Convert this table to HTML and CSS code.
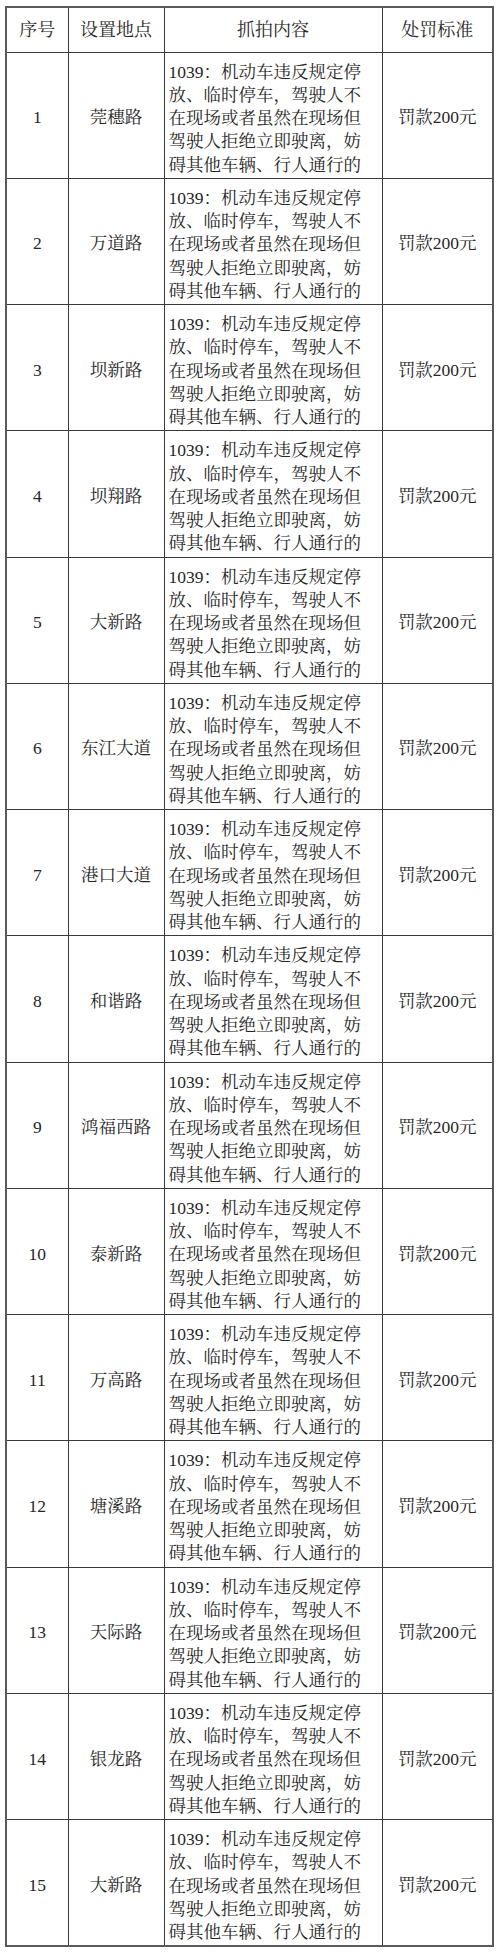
FILE: index.html
```html
<!DOCTYPE html>
<html lang="zh-CN">
<head>
<meta charset="utf-8">
<title>抓拍点位</title>
<link rel="stylesheet" href="styles.css">
</head>
<body>
<table class="grid">
  <colgroup>
    <col class="c-no"><col class="c-loc"><col class="c-desc"><col class="c-fine">
  </colgroup>
  <thead>
    <tr class="head"><th>序号</th><th>设置地点</th><th>抓拍内容</th><th>处罚标准</th></tr>
  </thead>
  <tbody>
    <tr><td class="no">1</td><td class="loc">莞穗路</td><td class="desc"><span class="ln">1039：机动车违反规定停</span><span class="ln">放、临时停车，驾驶人不</span><span class="ln">在现场或者虽然在现场但</span><span class="ln">驾驶人拒绝立即驶离，妨</span><span class="ln">碍其他车辆、行人通行的</span></td><td class="fine">罚款200元</td></tr>
    <tr><td class="no">2</td><td class="loc">万道路</td><td class="desc"><span class="ln">1039：机动车违反规定停</span><span class="ln">放、临时停车，驾驶人不</span><span class="ln">在现场或者虽然在现场但</span><span class="ln">驾驶人拒绝立即驶离，妨</span><span class="ln">碍其他车辆、行人通行的</span></td><td class="fine">罚款200元</td></tr>
    <tr><td class="no">3</td><td class="loc">坝新路</td><td class="desc"><span class="ln">1039：机动车违反规定停</span><span class="ln">放、临时停车，驾驶人不</span><span class="ln">在现场或者虽然在现场但</span><span class="ln">驾驶人拒绝立即驶离，妨</span><span class="ln">碍其他车辆、行人通行的</span></td><td class="fine">罚款200元</td></tr>
    <tr><td class="no">4</td><td class="loc">坝翔路</td><td class="desc"><span class="ln">1039：机动车违反规定停</span><span class="ln">放、临时停车，驾驶人不</span><span class="ln">在现场或者虽然在现场但</span><span class="ln">驾驶人拒绝立即驶离，妨</span><span class="ln">碍其他车辆、行人通行的</span></td><td class="fine">罚款200元</td></tr>
    <tr><td class="no">5</td><td class="loc">大新路</td><td class="desc"><span class="ln">1039：机动车违反规定停</span><span class="ln">放、临时停车，驾驶人不</span><span class="ln">在现场或者虽然在现场但</span><span class="ln">驾驶人拒绝立即驶离，妨</span><span class="ln">碍其他车辆、行人通行的</span></td><td class="fine">罚款200元</td></tr>
    <tr><td class="no">6</td><td class="loc">东江大道</td><td class="desc"><span class="ln">1039：机动车违反规定停</span><span class="ln">放、临时停车，驾驶人不</span><span class="ln">在现场或者虽然在现场但</span><span class="ln">驾驶人拒绝立即驶离，妨</span><span class="ln">碍其他车辆、行人通行的</span></td><td class="fine">罚款200元</td></tr>
    <tr><td class="no">7</td><td class="loc">港口大道</td><td class="desc"><span class="ln">1039：机动车违反规定停</span><span class="ln">放、临时停车，驾驶人不</span><span class="ln">在现场或者虽然在现场但</span><span class="ln">驾驶人拒绝立即驶离，妨</span><span class="ln">碍其他车辆、行人通行的</span></td><td class="fine">罚款200元</td></tr>
    <tr><td class="no">8</td><td class="loc">和谐路</td><td class="desc"><span class="ln">1039：机动车违反规定停</span><span class="ln">放、临时停车，驾驶人不</span><span class="ln">在现场或者虽然在现场但</span><span class="ln">驾驶人拒绝立即驶离，妨</span><span class="ln">碍其他车辆、行人通行的</span></td><td class="fine">罚款200元</td></tr>
    <tr><td class="no">9</td><td class="loc">鸿福西路</td><td class="desc"><span class="ln">1039：机动车违反规定停</span><span class="ln">放、临时停车，驾驶人不</span><span class="ln">在现场或者虽然在现场但</span><span class="ln">驾驶人拒绝立即驶离，妨</span><span class="ln">碍其他车辆、行人通行的</span></td><td class="fine">罚款200元</td></tr>
    <tr><td class="no">10</td><td class="loc">泰新路</td><td class="desc"><span class="ln">1039：机动车违反规定停</span><span class="ln">放、临时停车，驾驶人不</span><span class="ln">在现场或者虽然在现场但</span><span class="ln">驾驶人拒绝立即驶离，妨</span><span class="ln">碍其他车辆、行人通行的</span></td><td class="fine">罚款200元</td></tr>
    <tr><td class="no">11</td><td class="loc">万高路</td><td class="desc"><span class="ln">1039：机动车违反规定停</span><span class="ln">放、临时停车，驾驶人不</span><span class="ln">在现场或者虽然在现场但</span><span class="ln">驾驶人拒绝立即驶离，妨</span><span class="ln">碍其他车辆、行人通行的</span></td><td class="fine">罚款200元</td></tr>
    <tr><td class="no">12</td><td class="loc">塘溪路</td><td class="desc"><span class="ln">1039：机动车违反规定停</span><span class="ln">放、临时停车，驾驶人不</span><span class="ln">在现场或者虽然在现场但</span><span class="ln">驾驶人拒绝立即驶离，妨</span><span class="ln">碍其他车辆、行人通行的</span></td><td class="fine">罚款200元</td></tr>
    <tr><td class="no">13</td><td class="loc">天际路</td><td class="desc"><span class="ln">1039：机动车违反规定停</span><span class="ln">放、临时停车，驾驶人不</span><span class="ln">在现场或者虽然在现场但</span><span class="ln">驾驶人拒绝立即驶离，妨</span><span class="ln">碍其他车辆、行人通行的</span></td><td class="fine">罚款200元</td></tr>
    <tr><td class="no">14</td><td class="loc">银龙路</td><td class="desc"><span class="ln">1039：机动车违反规定停</span><span class="ln">放、临时停车，驾驶人不</span><span class="ln">在现场或者虽然在现场但</span><span class="ln">驾驶人拒绝立即驶离，妨</span><span class="ln">碍其他车辆、行人通行的</span></td><td class="fine">罚款200元</td></tr>
    <tr><td class="no">15</td><td class="loc">大新路</td><td class="desc"><span class="ln">1039：机动车违反规定停</span><span class="ln">放、临时停车，驾驶人不</span><span class="ln">在现场或者虽然在现场但</span><span class="ln">驾驶人拒绝立即驶离，妨</span><span class="ln">碍其他车辆、行人通行的</span></td><td class="fine">罚款200元</td></tr>
  </tbody>
</table>
</body>
</html>
```

FILE: styles.css
```css
html, body {
  margin: 0;
  padding: 0;
  background: #ffffff;
}

body {
  padding: 6px 0 0 5px;
  font-family: "Liberation Serif", "Noto Serif CJK SC", "Noto Sans CJK SC", serif;
  color: #262626;
}

.grid {
  width: 487px;
  table-layout: fixed;
  border-collapse: collapse;
  border: 2px solid #5a5a5a;
}

.c-no { width: 62px; }
.c-loc { width: 96px; }
.c-desc { width: 218px; }
.c-fine { width: 111px; }

.grid th,
.grid td {
  border: 1px solid #3a3a3a;
  padding: 0;
  font-size: 17.5px;
  font-weight: normal;
  text-align: center;
  vertical-align: middle;
  line-height: 22px;
}

.head {
  height: 45px;
}

.head th {
  font-size: 18px;
}

.grid tbody tr {
  height: 126.27px;
}

.grid td.desc {
  text-align: left;
  vertical-align: top;
  padding: 8px 0 0 4px;
  white-space: nowrap;
}

.ln {
  display: block;
  height: 23.25px;
  line-height: 23.25px;
  overflow: visible;
}

.grid td.fine,
.grid td.loc,
.grid td.no {
  padding-top: 4px;
}
```
